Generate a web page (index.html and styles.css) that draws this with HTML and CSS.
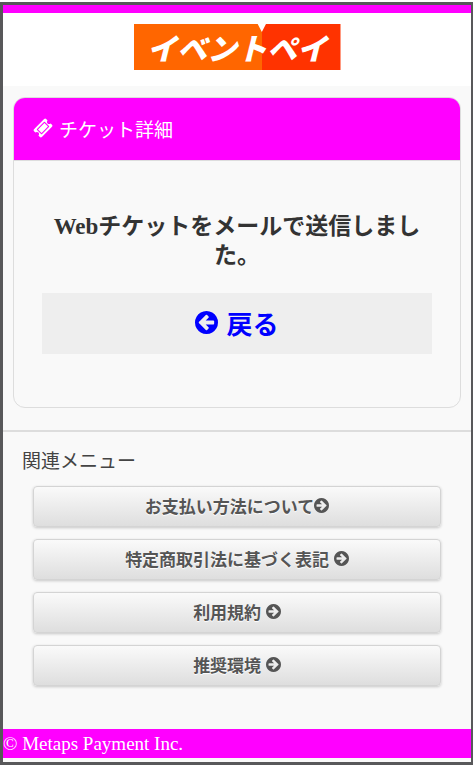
FILE: index.html
```
<!DOCTYPE html>
<html lang="ja">
<head>
    <meta charset="UTF-8">
    <meta name="viewport" content="width=device-width, initial-scale=1.0">
    <title>チケット詳細 | イベントペイ</title>
    <link rel="stylesheet" href="styles.css">
</head>
<body>
    <svg class="defs" width="0" height="0" aria-hidden="true">
        <symbol id="arrow-right" viewBox="0 -128 1536 1536">
            <path d="M1285 640q0 27-18 45l-91 91l-362 362q-18 18-45 18t-45-18l-91-91q-18-18-18-45t18-45l189-189h-502q-26 0-45-19t-19-45v-128q0-26 19-45t45-19h502l-189-189q-19-19-19-45t19-45l91-91q18-18 45-18t45 18l362 362l91 91q18 18 18 45zM1536 640q0-209-103-385.5t-279.5-279.5t-385.5-103t-385.5 103t-279.5 279.5t-103 385.5t103 385.5t279.5 279.5t385.5 103t385.5-103t279.5-279.5t103-385.5z" fill-rule="evenodd"/>
        </symbol>
    </svg>

    <div class="page">
        <header class="site-header">
            <div class="logo">
                <span class="logo-text">イベントペイ</span>
            </div>
        </header>

        <main>
            <section class="panel">
                <h1 class="panel-title">
                    <svg class="icon-ticket" viewBox="0 0 1792 1792" aria-hidden="true">
                        <path fill-rule="evenodd" d="M1024 452l316 316-572 572-316-316zm-211 979l618-618q19-19 19-45t-19-45l-362-362q-18-18-45-18t-45 18l-618 618q-19 19-19 45t19 45l362 362q18 18 45 18t45-18zm889-637l-907 908q-37 37-90.500 37t-90.500-37l-126-125q56-56 56-136t-56-136-136-56-136 56l-125-126q-37-37-37-90.500t37-90.500l907-906q37-37 90.500-37t90.500 37l125 125q-56 56-56 136t56 136 136 56 136-56l126 125q37 37 37 90.500t-37 90.500z"/>
                    </svg>
                    チケット詳細
                </h1>
                <div class="panel-body">
                    <p class="message">Webチケットをメールで送信しました。</p>
                    <a href="#" class="back-link">
                        <svg class="icon-back" aria-hidden="true"><use href="#arrow-right"/></svg>
                        戻る
                    </a>
                </div>
            </section>
        </main>

        <nav class="related">
            <h2>関連メニュー</h2>
            <ul>
                <li><a href="#" class="menu-btn">お支払い方法について<svg class="icon-arrow" aria-hidden="true"><use href="#arrow-right"/></svg></a></li>
                <li><a href="#" class="menu-btn">特定商取引法に基づく表記 <svg class="icon-arrow" aria-hidden="true"><use href="#arrow-right"/></svg></a></li>
                <li><a href="#" class="menu-btn">利用規約 <svg class="icon-arrow" aria-hidden="true"><use href="#arrow-right"/></svg></a></li>
                <li><a href="#" class="menu-btn">推奨環境 <svg class="icon-arrow" aria-hidden="true"><use href="#arrow-right"/></svg></a></li>
            </ul>
        </nav>

        <footer class="site-footer">© Metaps Payment Inc.</footer>
    </div>
</body>
</html>
```

FILE: styles.css
```
* {
    box-sizing: border-box;
}

body {
    margin: 0;
    padding-top: 2px;
    background: #fff;
    color: #444;
    font-family: "Liberation Serif", "Noto Sans CJK JP", serif;
    font-size: 19px;
}

h1, h2, p, ul {
    margin: 0;
    padding: 0;
    font-weight: normal;
}

.defs {
    position: absolute;
}

.page {
    border: 3px solid #58585a;
    border-right-width: 2px;
    padding-bottom: 4px;
    background: #f9f9f9;
}

/* ヘッダー */
.site-header {
    display: flex;
    justify-content: center;
    padding: 11px 0 16px;
    border-top: 8px solid #f0f;
    background: #fff;
}

.logo {
    display: flex;
    align-items: center;
    justify-content: center;
    width: 207px;
    height: 46px;
    background: linear-gradient(to right, #f60 62%, #f30 62%);
    clip-path: polygon(0 0, 60% 0, 62% 8px, 64% 0, 100% 0, 100% 100%, 0 100%);
}

.logo-text {
    color: #fff;
    font-family: "Noto Sans CJK JP", sans-serif;
    font-size: 30px;
    font-style: italic;
    font-weight: 900;
    line-height: 44px;
    white-space: nowrap;
}

/* チケット詳細 */
.panel {
    margin: 11px 10px 22px;
    border: 1px solid #ddd;
    border-radius: 12px;
    overflow: hidden;
}

.panel-title {
    display: flex;
    align-items: center;
    gap: 6px;
    height: 63px;
    padding: 0 0 2px 19px;
    border-bottom: 1px solid #ddd;
    background: #f0f;
    color: #fff;
    font-size: 19px;
}

.icon-ticket {
    width: 20px;
    height: 20px;
    fill: currentColor;
}

.panel-body {
    padding: 51px 28px 53px;
    text-align: center;
}

.message {
    margin-bottom: 23px;
    color: #333;
    font-size: 23px;
    font-weight: bold;
    line-height: 29px;
}

.back-link {
    display: flex;
    align-items: center;
    justify-content: center;
    gap: 8px;
    height: 61px;
    padding-bottom: 2px;
    background: #eee;
    color: #00f;
    font-family: "Liberation Sans", "Noto Sans CJK JP", sans-serif;
    font-size: 26px;
    font-weight: bold;
    text-decoration: none;
}

.icon-back {
    width: 23px;
    height: 23px;
    fill: currentColor;
    transform: scaleX(-1);
}

/* 関連メニュー */
.related {
    padding: 16px 30px 43px;
    border-top: 2px solid #ddd;
}

.related h2 {
    margin: 0 0 10px -11px;
    font-size: 19px;
    line-height: 28px;
}

.related ul {
    display: flex;
    flex-direction: column;
    gap: 12px;
    list-style: none;
}

.menu-btn {
    display: flex;
    align-items: center;
    justify-content: center;
    height: 41px;
    padding-bottom: 3px;
    border: 1px solid #d4d4d4;
    border-radius: 4px;
    background: linear-gradient(#fafafa, #dedede);
    box-shadow: 0 1px 3px rgba(0, 0, 0, 0.2);
    color: #555;
    font-family: "Liberation Sans", "Noto Sans CJK JP", sans-serif;
    font-size: 17px;
    font-weight: bold;
    text-decoration: none;
    text-shadow: 0 1px 1px #fff;
    white-space: pre;
}

.icon-arrow {
    width: 15px;
    height: 15px;
    fill: currentColor;
}

/* フッター */
.site-footer {
    background: #f0f;
    color: #fff;
    line-height: 29px;
}
```
